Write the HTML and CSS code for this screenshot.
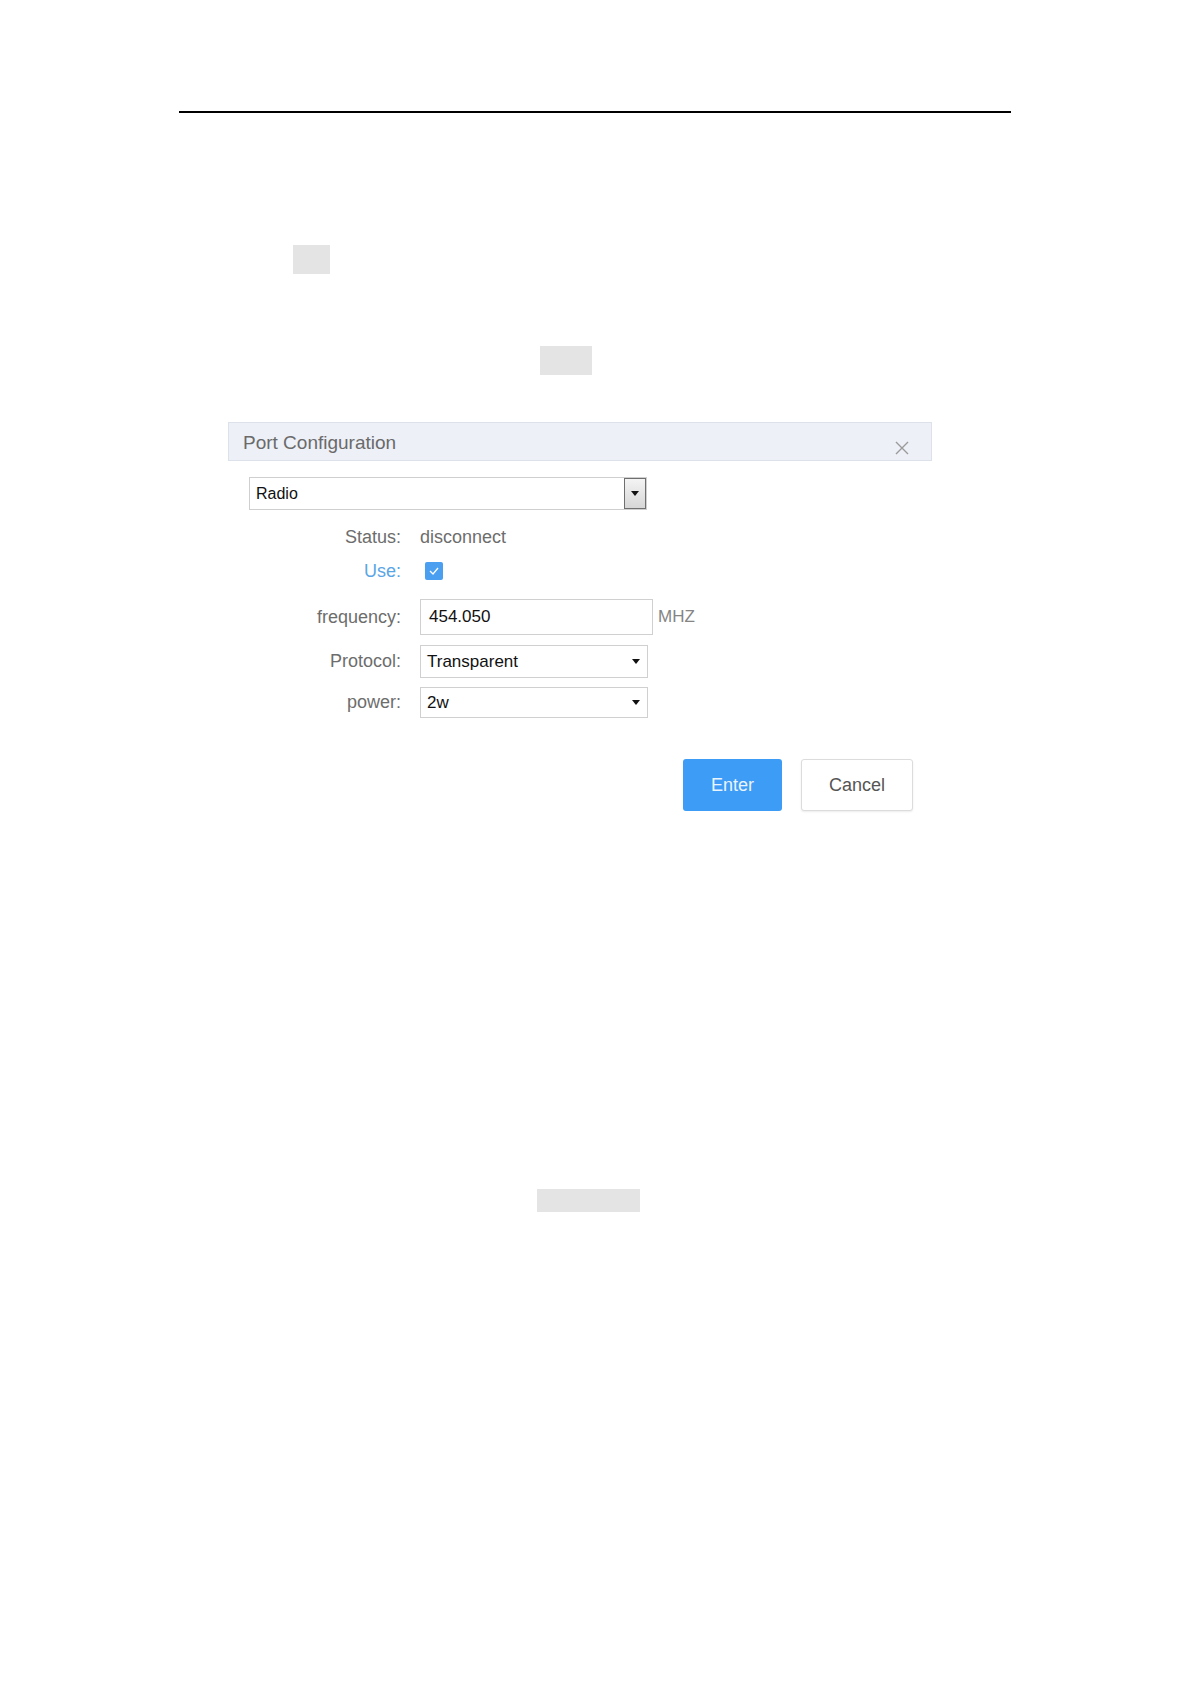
FILE: index.html
```html
<!DOCTYPE html>
<html lang="en">
<head>
    <meta charset="UTF-8">
    <meta name="viewport" content="width=device-width, initial-scale=1.0">
    <title>Port Configuration</title>
    <link rel="stylesheet" href="styles.css">
</head>
<body>
    <div class="page">
        <div class="rule"></div>

        <!-- blanked-out words in the manual text -->
        <div class="mark mark-1"></div>
        <div class="mark mark-2"></div>

        <div class="dialog">
            <div class="dlg-head">
                <span class="dlg-title">Port Configuration</span>
                <svg class="dlg-close" width="14" height="14" viewBox="0 0 14 14">
                    <path d="M1 1 L13 13 M13 1 L1 13" stroke="#9a9a9a" stroke-width="1.4" fill="none"/>
                </svg>
            </div>

            <div class="dlg-body">
                <div class="port-select">
                    <span class="port-value">Radio</span>
                    <span class="port-btn"><i class="caret"></i></span>
                </div>

                <div class="field row-status">
                    <span class="label">Status:</span>
                    <span class="text">disconnect</span>
                </div>
                <div class="field row-use">
                    <span class="label label-use">Use:</span>
                    <span class="check">
                        <svg width="12" height="10" viewBox="0 0 12 10">
                            <path d="M2 5 L5 8 L10 2" stroke="#fff" stroke-width="1.3" fill="none"/>
                        </svg>
                    </span>
                </div>
                <div class="field row-freq">
                    <span class="label">frequency:</span>
                    <div class="freq-wrap">
                        <span class="box box-freq">454.050</span>
                        <span class="unit">MHZ</span>
                    </div>
                </div>
                <div class="field row-proto">
                    <span class="label">Protocol:</span>
                    <span class="box box-select">Transparent<i class="caret"></i></span>
                </div>
                <div class="field row-power">
                    <span class="label">power:</span>
                    <span class="box box-select box-short">2w<i class="caret"></i></span>
                </div>

                <div class="actions">
                    <button type="button" class="btn btn-enter">Enter</button>
                    <button type="button" class="btn btn-cancel">Cancel</button>
                </div>
            </div>
        </div>

        <div class="mark mark-3"></div>
    </div>
</body>
</html>
```

FILE: styles.css
```css
* {
    box-sizing: border-box;
}

body {
    margin: 0;
    background-color: #fff;
    font-family: "Liberation Sans", Arial, sans-serif;
}

.page {
    padding-top: 111px;
}

.rule {
    height: 2px;
    margin: 0 180px 0 179px;
    background-color: #000;
}

.mark {
    background-color: #e4e4e4;
}

.mark-1 {
    width: 37px;
    height: 29px;
    margin: 132px 0 0 293px;
}

.mark-2 {
    width: 52px;
    height: 29px;
    margin: 72px 0 0 540px;
}

.mark-3 {
    width: 103px;
    height: 23px;
    margin: 378px 0 0 537px;
}

/* dialog */
.dialog {
    width: 704px;
    margin: 47px 0 0 228px;
}

.dlg-head {
    display: flex;
    align-items: center;
    justify-content: space-between;
    height: 39px;
    padding: 2px 22px 0 14px;
    border: 1px solid #dde1ea;
    background-color: #edf0f7;
}

.dlg-title {
    font-size: 19px;
    color: #6a6a6a;
}

.dlg-close {
    margin-top: 10px;
}

.dlg-body {
    padding: 16px 19px 0 0;
}

.port-select {
    display: flex;
    align-items: center;
    width: 398px;
    height: 33px;
    margin-left: 21px;
    border: 1px solid #cfcfcf;
}

.port-value {
    flex: 1;
    padding-left: 6px;
    font-size: 16px;
    color: #111;
}

.port-btn {
    display: flex;
    align-items: center;
    justify-content: center;
    width: 22px;
    height: 31px;
    border: 1px solid #6f6f6f;
    background: linear-gradient(#f4f4f4, #d6d6d6);
}

.caret {
    width: 0;
    height: 0;
    border-left: 4px solid transparent;
    border-right: 4px solid transparent;
    border-top: 5px solid #111;
}

/* rows */
.field {
    display: grid;
    grid-template-columns: 173px auto;
    column-gap: 19px;
    align-items: center;
}

.label {
    text-align: right;
    font-size: 18px;
    color: #6d6d6d;
}

.label-use {
    color: #5aa5e6;
}

.text {
    font-size: 18px;
    color: #6d6d6d;
}

.row-status {
    height: 28px;
    margin-top: 13px;
}

.row-use {
    height: 28px;
    margin-top: 6px;
}

.check {
    display: flex;
    align-items: center;
    justify-content: center;
    width: 18px;
    height: 18px;
    margin-left: 5px;
    border-radius: 2px;
    background-color: #4a9ff0;
}

.row-freq {
    margin-top: 14px;
}

.row-proto {
    margin-top: 10px;
}

.row-power {
    margin-top: 9px;
}

.freq-wrap {
    display: flex;
    align-items: center;
    gap: 5px;
}

.unit {
    font-size: 17px;
    color: #858585;
}

.box {
    display: flex;
    align-items: center;
    border: 1px solid #d0d0d0;
    font-size: 17px;
    color: #111;
}

.box-freq {
    width: 233px;
    height: 36px;
    padding-left: 8px;
}

.box-select {
    justify-content: space-between;
    width: 228px;
    height: 33px;
    padding: 0 7px 0 6px;
}

.box-short {
    height: 31px;
}

/* buttons */
.actions {
    display: flex;
    justify-content: flex-end;
    gap: 19px;
    margin-top: 41px;
}

.btn {
    height: 52px;
    border-radius: 3px;
    font-family: "Liberation Sans", Arial, sans-serif;
    font-size: 18px;
    cursor: pointer;
}

.btn-enter {
    width: 99px;
    border: none;
    background-color: #3d9cf5;
    color: #eaf4ff;
}

.btn-cancel {
    width: 112px;
    border: 1px solid #dcdcdc;
    background-color: #fff;
    color: #555;
    box-shadow: 0 1px 2px rgba(0, 0, 0, 0.08);
}
```
